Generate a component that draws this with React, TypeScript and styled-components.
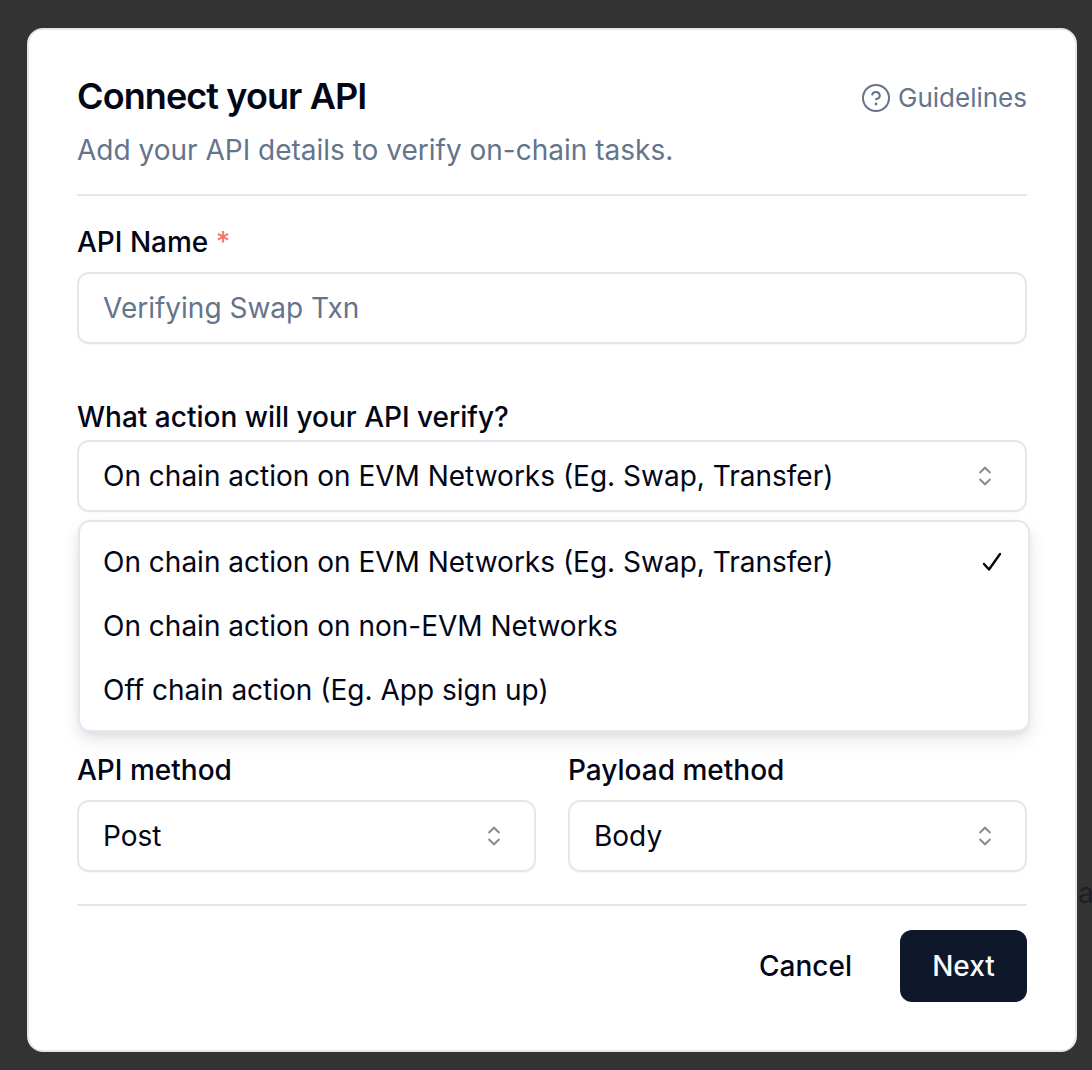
import React from "react";
import styled, { createGlobalStyle } from "styled-components";

const Global = createGlobalStyle`
  html, body { margin: 0; padding: 0; background: #333333; }
  * { box-sizing: border-box; }
`;

const Backdrop = styled.div`
  position: relative;
  width: 1092px;
  height: 1070px;
  overflow: hidden;
  padding: 28px 15px 18px 27px;
  background: #333333;
  font-family: Inter, "Liberation Sans", sans-serif;
`;

const BackdropLine = styled.div<{ $top: number }>`
  position: absolute;
  left: 1077px;
  right: 0;
  top: ${(p) => p.$top}px;
  height: 1px;
  background: #2f2f2f;
`;

const BackdropLetter = styled.span`
  position: absolute;
  left: 1078px;
  top: 876px;
  font-size: 28px;
  line-height: 34px;
  color: #1f1f20;
`;

const Dialog = styled.div`
  position: relative;
  width: 1050px;
  height: 1024px;
  display: flex;
  flex-direction: column;
  padding: 48px;
  background: #ffffff;
  border: 2px solid #e2e8f0;
  border-radius: 16px;
`;

const Header = styled.header`
  display: flex;
  justify-content: space-between;
  align-items: flex-start;
`;

const Title = styled.h2`
  margin: 0;
  font-size: 36px;
  line-height: 36px;
  font-weight: 600;
  letter-spacing: -0.9px;
  color: #020617;
`;

const GuideLink = styled.a`
  display: flex;
  align-items: center;
  gap: 8px;
  height: 36px;
  margin-top: 2px;
  font-size: 26px;
  line-height: 36px;
  color: #64748b;
`;

const Subtitle = styled.p`
  margin: 16px 0 0;
  font-size: 28px;
  line-height: 36px;
  color: #64748b;
`;

const Divider = styled.hr<{ $top: number }>`
  width: 100%;
  height: 2px;
  margin: ${(p) => p.$top}px 0 0;
  border: 0;
  background: #e2e8f0;
`;

const Label = styled.label<{ $top: number; $gap: number }>`
  display: block;
  margin: ${(p) => p.$top}px 0 ${(p) => p.$gap}px;
  font-size: 28px;
  line-height: 28px;
  font-weight: 500;
  color: #020617;
`;

const Required = styled.span`
  color: #f87171;
`;

const Field = styled.div<{ $muted?: boolean }>`
  display: flex;
  align-items: center;
  justify-content: space-between;
  height: 72px;
  padding: 0 33px 0 24px;
  background: #ffffff;
  border: 2px solid #e2e8f0;
  border-radius: 12px;
  box-shadow: 0 1px 2px rgba(15, 23, 42, 0.04);
  font-size: 28px;
  color: ${(p) => (p.$muted ? "#64748b" : "#020617")};
`;

const Menu = styled.div`
  position: absolute;
  left: 49px;
  top: 490px;
  width: 952px;
  height: 212px;
  padding: 8px 0;
  display: flex;
  flex-direction: column;
  justify-content: center;
  background: #ffffff;
  border: 2px solid #e2e8f0;
  border-radius: 12px;
  box-shadow: 0 8px 20px -2px rgba(15, 23, 42, 0.12), 0 4px 8px -2px rgba(15, 23, 42, 0.08);
`;

const MenuItem = styled.div`
  display: flex;
  align-items: center;
  justify-content: space-between;
  height: 64px;
  padding: 0 26px 0 23px;
  font-size: 28px;
  color: #020617;
`;

const Columns = styled.div`
  display: grid;
  grid-template-columns: 1fr 1fr;
  gap: 32px;
`;

const Footer = styled.footer`
  display: flex;
  justify-content: flex-end;
  align-items: center;
  gap: 16px;
  margin-top: 24px;
`;

const GhostButton = styled.button`
  height: 72px;
  padding: 0 32px;
  border: 0;
  background: transparent;
  font: 500 28px Inter, sans-serif;
  color: #020617;
`;

const PrimaryButton = styled.button`
  width: 127px;
  height: 72px;
  border: 0;
  border-radius: 12px;
  background: #0f172a;
  font: 500 28px Inter, sans-serif;
  color: #f8fafc;
`;

const Chevrons = () => (
  <svg width="14" height="20" viewBox="0 0 14 20" fill="none" stroke="#8b8b92" strokeWidth="2" strokeLinejoin="miter">
    <path d="M1.5 7 7 1.7 12.5 7" />
    <path d="M1.5 13 7 18.3 12.5 13" />
  </svg>
);

const Check = () => (
  <svg width="20" height="20" viewBox="0 0 20 20" fill="none" stroke="#020617" strokeWidth="2.4" strokeLinecap="round" strokeLinejoin="round">
    <path d="M2 12 7 17.5 18 2" />
  </svg>
);

const HelpIcon = () => (
  <svg width="28" height="28" viewBox="0 0 28 28" fill="none" stroke="#64748b" strokeWidth="2" strokeLinecap="round" strokeLinejoin="round">
    <circle cx="14" cy="14" r="13" />
    <path d="M10.2 10.6a3.9 3.9 0 0 1 7.6 1.2c0 2.5-3.8 3.5-3.8 3.5" />
    <path d="M14 20h.01" strokeWidth="2.8" />
  </svg>
);

const options = [
  "On chain action on EVM Networks (Eg. Swap, Transfer)",
  "On chain action on non-EVM Networks",
  "Off chain action (Eg. App sign up)",
];

export default function App() {
  return (
    <Backdrop>
      <Global />
      <BackdropLine $top={346} />
      <BackdropLine $top={765} />
      <BackdropLetter>a</BackdropLetter>
      <Dialog>
        <Header>
          <Title>Connect your API</Title>
          <GuideLink>
            <HelpIcon />
            Guidelines
          </GuideLink>
        </Header>
        <Subtitle>Add your API details to verify on-chain tasks.</Subtitle>
        <Divider $top={26} />
        <Label $top={32} $gap={16}>
          API Name <Required>*</Required>
        </Label>
        <Field $muted>Verifying Swap Txn</Field>
        <Label $top={59} $gap={9}>What action will your API verify?</Label>
        <Field>
          {options[0]}
          <Chevrons />
        </Field>
        <Menu>
          <MenuItem>
            {options[0]}
            <Check />
          </MenuItem>
          <MenuItem>{options[1]}</MenuItem>
          <MenuItem>{options[2]}</MenuItem>
        </Menu>
        <Columns>
          <div>
            <Label $top={244} $gap={16}>API method</Label>
            <Field>
              Post
              <Chevrons />
            </Field>
          </div>
          <div>
            <Label $top={244} $gap={16}>Payload method</Label>
            <Field>
              Body
              <Chevrons />
            </Field>
          </div>
        </Columns>
        <Divider $top={32} />
        <Footer>
          <GhostButton>Cancel</GhostButton>
          <PrimaryButton>Next</PrimaryButton>
        </Footer>
      </Dialog>
    </Backdrop>
  );
}
